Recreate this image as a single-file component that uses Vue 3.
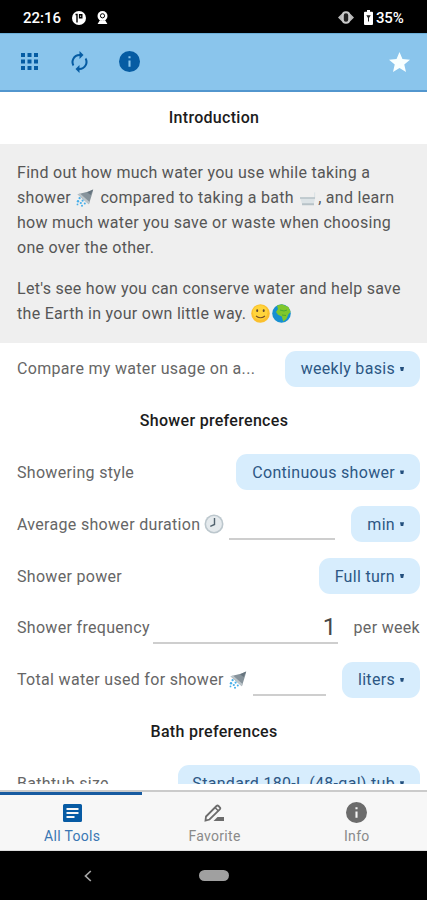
<script setup>
import { ref } from 'vue'

const rows = [
  { id: 'compare', label: 'Compare my water usage on a...', pill: 'weekly basis', width: 135 },
  { id: 'shower', title: 'Shower preferences' },
  { id: 'style', label: 'Showering style', pill: 'Continuous shower', width: 184 },
  { id: 'duration', label: 'Average shower duration', icon: 'clock', field: true, value: '', pill: 'min', width: 69 },
  { id: 'power', label: 'Shower power', pill: 'Full turn', width: 101 },
  { id: 'frequency', label: 'Shower frequency', field: true, value: '1', unit: 'per week' },
  { id: 'total', label: 'Total water used for shower', icon: 'shower', field: true, value: '', pill: 'liters', width: 78 },
  { id: 'bath', title: 'Bath preferences' },
  { id: 'tub', label: 'Bathtub size', pill: 'Standard 180-L (48-gal) tub', width: 242 },
]
const active = ref('tools')
const tabs = [
  { id: 'tools', label: 'All Tools' },
  { id: 'favorite', label: 'Favorite' },
  { id: 'info', label: 'Info' },
]
</script>

<template>
  <div class="phone">
    <svg class="defs" width="0" height="0" aria-hidden="true">
      <symbol id="shower" viewBox="0 0 18 18">
        <path d="M1.5 5.2 12.8 2.6 17.2.6 16.3 4.2 12.9 15.2Z" fill="#87939b" />
        <path d="M1.5 5.2 4 4.6 13.6 13 12.9 15.2Z" fill="#bcc5ca" />
        <path d="M11 3.2 17.2.6 14.6 6Z" fill="#66747e" />
        <g fill="#45aeea">
          <circle cx="3.6" cy="9.2" r="1.1" /><circle cx="6.6" cy="11.6" r="1.1" /><circle cx="2" cy="12.2" r="1.2" />
          <circle cx="8.8" cy="14.5" r="1" /><circle cx="4.8" cy="14" r="1.1" /><circle cx="1.5" cy="15.4" r=".9" /><circle cx="6" cy="16.7" r="1" />
        </g>
      </symbol>
      <symbol id="clock" viewBox="0 0 20 20">
        <circle cx="10" cy="10" r="9.5" fill="#bcc7cd" />
        <circle cx="10" cy="10" r="7.9" fill="#e5eaed" />
        <path d="M10.5 4v6.5L6.3 12.3" fill="none" stroke="#51626e" stroke-width="1.4" />
      </symbol>
      <symbol id="info" viewBox="2 2 20 20">
        <path d="M12 2a10 10 0 1 0 0 20 10 10 0 0 0 0-20Zm1 15h-2v-6h2v6Zm0-8h-2V7h2v2Z" />
      </symbol>
    </svg>

    <header class="status">
      <span class="time">22:16</span>
      <svg class="s-app" viewBox="0 0 14 14"><circle cx="7" cy="7" r="7" fill="#fff" /><path d="M5 11.5V3.500H3.500M7.600 3.700h2.200v3H7.600Z" fill="none" stroke="#000" stroke-width="1.400" /></svg>
      <svg class="s-cam" viewBox="0 0 11 13"><circle cx="5.5" cy="5" r="5" fill="#fff" /><circle cx="5.5" cy="4.800" r="2.100" fill="none" stroke="#000" stroke-width="1" /><path d="m3 9-2.400 4h9.800L8 9l-2.500 1Z" fill="#fff" /></svg>
      <span class="grow"></span>
      <svg class="s-vib" viewBox="0 0 16 13"><path d="M0 6.500 4.500 2v9ZM16 6.500 11.500 2v9Z" fill="#b9b9b9" /><rect x="4.800" y="1.200" width="6.400" height="10.600" rx="3" fill="#222" stroke="#c9c9c9" stroke-width="2" /></svg>
      <svg class="s-bat" viewBox="0 0 9 15"><path d="M3 0h3v1.700h2q1 0 1 1V14q0 1-1 1H1q-1 0-1-1V2.700q0-1 1-1h2Z" fill="#fff" /><path d="M2.300 5.300h4.500L5 8.100v3.400H4V8.100Z" fill="#222" /></svg>
      <span class="percent">35%</span>
    </header>

    <nav class="toolbar">
      <svg class="grid" viewBox="0 0 17 17"><path d="M0 0h4v4H0ZM6.5 0h4v4h-4ZM13 0h4v4h-4ZM0 6.5h4v4H0ZM6.5 6.5h4v4h-4ZM13 6.5h4v4h-4ZM0 13h4v4H0ZM6.5 13h4v4h-4ZM13 13h4v4h-4Z" /></svg>
      <svg class="sync" viewBox="2.5 1 19 22"><path d="M12 6v3l4-4-4-4v3a8 8 0 0 0-6.76 12.26l1.46-1.46A6 6 0 0 1 12 6Zm6.76 1.74L17.3 9.2A6 6 0 0 1 12 18v-3l-4 4 4 4v-3a8 8 0 0 0 6.76-12.26Z" /></svg>
      <svg class="about"><use href="#info" /></svg>
      <span class="grow"></span>
      <svg class="star" viewBox="2 2 20 19"><path d="M12 17.27 18.18 21l-1.64-7.03L22 9.24l-7.19-.61L12 2 9.19 8.63 2 9.24l5.46 4.73L5.82 21Z" /></svg>
    </nav>

    <main class="content">
      <h2 class="intro-title">Introduction</h2>
      <section class="intro">
        <p>
          <span>Find out how much water you use while taking a</span><br>
          <span>shower <svg class="emoji spray"><use href="#shower" /></svg> compared to taking a bath <svg class="emoji bathtub" viewBox="0 0 18 18"><path d="M1 8.5h14V3.8l1.200-.8v6l-1.500 6H3Z" fill="#dce3e6" /><path d="M1 8.200h15v1.500H1ZM3 14.200h12v2H3Z" fill="#b7c2c7" /></svg>, and learn</span><br>
          <span>how much water you save or waste when choosing</span><br>
          <span>one over the other.</span>
        </p>
        <p>
          <span>Let's see how you can conserve water and help save</span><br>
          <span>the Earth in your own little way. <svg class="emoji face" viewBox="0 0 19 19"><circle cx="9.5" cy="9.5" r="9.3" fill="#fbc02d" /><circle cx="9.2" cy="8.5" r="7.3" fill="#ffd43b" /><ellipse cx="6.2" cy="6.7" rx="1" ry="1.400" fill="#5d4632" /><ellipse cx="12.700" cy="6.700" rx="1" ry="1.400" fill="#5d4632" /><path d="M5 12q4.500 3.500 9 0" fill="none" stroke="#795125" stroke-width="1.100" /></svg><svg class="emoji face earth" viewBox="0 0 19 19"><circle cx="9.5" cy="9.5" r="9.3" fill="#168fd1" /><path d="M5 1.5 10 .3 16.5 3l2.1 5-2.2 2.3-2 4.8-3.2 2.3-1.4-4.8L6 10.7 4 8l2-3Z" fill="#7fc72c" /><path d="m8 6 4 1 3-1M10 11l4 .5" fill="none" stroke="#4ca832" stroke-width="1" /></svg></span>
        </p>
      </section>

      <template v-for="row in rows" :key="row.id">
        <h2 v-if="row.title" class="row-title">{{ row.title }}</h2>
        <div v-else class="row" :class="row.id">
          <span class="label">{{ row.label }}</span>
          <svg v-if="row.icon" class="row-icon" :class="row.icon"><use :href="'#' + row.icon" /></svg>
          <span v-if="row.field" class="field">{{ row.value }}</span>
          <span v-else class="grow"></span>
          <button v-if="row.pill" class="pill" :style="{ width: row.width + 'px' }"><span>{{ row.pill }}</span><i></i></button>
          <span v-if="row.unit" class="unit">{{ row.unit }}</span>
        </div>
      </template>
    </main>

    <footer class="tabs">
      <button v-for="tab in tabs" :key="tab.id" class="tab" :class="{ active: active === tab.id }" @click="active = tab.id">
        <svg v-if="tab.id === 'tools'" class="t-tools" viewBox="0 0 19 18"><path fill-rule="evenodd" d="M1.5 0h16Q19 0 19 1.5v15q0 1.5-1.5 1.5h-16Q0 18 0 16.500v-15Q0 0 1.500 0ZM3.500 4v2h12V4Zm0 4v2h12V8Zm0 4v2h8v-2Z" /></svg>
        <svg v-else-if="tab.id === 'favorite'" class="t-fav" viewBox="0 0 20 18"><path d="M2 12.500 12.500 2q1-1 2 0l1.300 1.300q1 1 0 2L5.500 15.500 1.500 16.500Z" fill="none" stroke="currentColor" stroke-width="1.800" /><path d="m11 3.500 3.500 3.500" stroke="currentColor" stroke-width="1.500" /><path d="m13.500 13-4 4H20v-4Z" /></svg>
        <svg v-else class="t-info"><use href="#info" /></svg>
        <span>{{ tab.label }}</span>
      </button>
    </footer>
    <div class="system"><svg class="back" viewBox="0 0 8 12"><path d="M6.800 1 1.500 6l5.300 5" fill="none" stroke="#a5a5a5" stroke-width="1.700" /></svg><span class="home"></span></div>
  </div>
</template>

<style>
body { margin: 0; background: #fff; }
</style>

<style scoped>
.phone { width: 427px; height: 900px; display: flex; flex-direction: column; overflow: hidden; background: #fff; font-family: Roboto, "Liberation Sans", sans-serif; font-size: 16px; letter-spacing: .31px; color: #666; }
.phone * { box-sizing: border-box; }
svg { display: block; flex: none; }
.defs { display: none; }
.grow { flex: 1; }
button { font: inherit; letter-spacing: inherit; border: 0; padding: 0; }
.status { height: 33px; flex: none; background: #000; color: #fff; display: flex; align-items: center; padding: 2px 22px 0 23px; font-size: 15px; font-weight: 500; letter-spacing: 0; }
.time { width: 49px; }
.s-app { width: 14px; height: 14px; margin-right: 11px; }
.s-cam { width: 11px; height: 13px; }
.s-vib { width: 16px; height: 13px; margin-right: 10px; }
.s-bat { width: 9px; height: 15px; margin-right: 3px; }
.percent { width: 29px; letter-spacing: -.2px; }
.toolbar { height: 59px; flex: none; background: #8ac5ec; border-top: 1px solid #6baed8; border-bottom: 2px solid #5296ce; display: flex; align-items: center; padding: 0 17px 1px 21px; fill: #065ca3; }
.grid { width: 17px; height: 17px; }
.sync { width: 19px; height: 22px; margin-left: 32px; }
.about { width: 21px; height: 21px; margin-left: 30px; }
.star { width: 21px; height: 20px; fill: #f8ffff; }
.content { height: 692px; flex: none; overflow: hidden; }
h2 { margin: 0; font-size: 16px; font-weight: 500; color: #1c1c1c; text-align: center; letter-spacing: .3px; }
.intro-title { height: 52px; line-height: 51px; padding-left: 1px; }
.intro { height: 199px; background: #efefef; padding: 16px 0 0 17px; color: #565656; white-space: nowrap; line-height: 25px; letter-spacing: .29px; }
.intro p { margin: 0 0 16px; height: 100px; }
.intro p + p { height: 50px; }
.emoji { display: inline-block; width: 18px; height: 18px; vertical-align: -4px; }
.spray { margin: 0 2px 0 1px; }
.bathtub { margin: 0 1px 0 1px; }
.face { width: 19px; height: 19px; }
.earth { margin-left: 2px; }
.row, .row-title { height: 51.8px; }
.row-title { line-height: 51px; padding-left: 1px; }
.row { display: flex; align-items: center; padding: 0 7px 0 17px; white-space: nowrap; }
.pill { height: 36px; flex: none; border-radius: 11px; background: #d7edfd; color: #2c5784; display: flex; align-items: center; justify-content: flex-end; gap: 5px; padding-right: 16px; }
.pill i { width: 4px; height: 4px; background: #234f7d; clip-path: polygon(0 0, 100% 0, 80% 100%, 20% 100%); }
.field { flex: 1; height: 32px; border-bottom: 2px solid #cecece; text-align: right; font-size: 24px; line-height: 30px; color: #484848; padding-right: 1px; }
.row-icon.clock { width: 20px; height: 20px; margin: 0 5px 0 4px; }
.duration .field { margin-right: 16px; }
.row-icon.shower { width: 18px; height: 18px; margin: 0 6px 0 5px; }
.total .field { margin-right: 16px; }
.frequency .field { margin: 0 16px 0 3px; }
.tabs { height: 67px; flex: none; background: #f7f7f7; display: flex; border-top: 6px solid #fff; border-bottom: 1px solid #ddd; }
.tab { flex: 1; background: #f7f7f7; border-top: 2px solid #cbcbcb; display: flex; flex-direction: column; align-items: center; padding-left: 2px; font-size: 14px; letter-spacing: .3px; color: #8a8a8a; fill: #6c6c6c; }
.tab.active { color: #3a76b3; fill: #075ba4; border-top: 0; box-shadow: inset 0 2px #cbcbcb, inset 0 5px #175ba1; }
.tab svg { margin-top: 12px; }
.tab.active svg { margin-top: 14px; }
.t-tools { width: 19px; height: 18px; }
.t-fav { width: 20px; height: 18px; color: #6c6c6c; }
.t-info { width: 21px; height: 21px; }
.tab .t-info { margin-top: 10px; }
.tab span { margin-top: 6px; line-height: 16px; }
.tab .t-info + span { margin-top: 5px; }
.system { height: 49px; flex: none; background: #000; display: flex; align-items: center; padding-left: 84px; }
.back { width: 8px; height: 12px; }
.home { width: 30px; height: 11px; border-radius: 6px; background: #a0a0a0; margin-left: 107px; }
</style>
